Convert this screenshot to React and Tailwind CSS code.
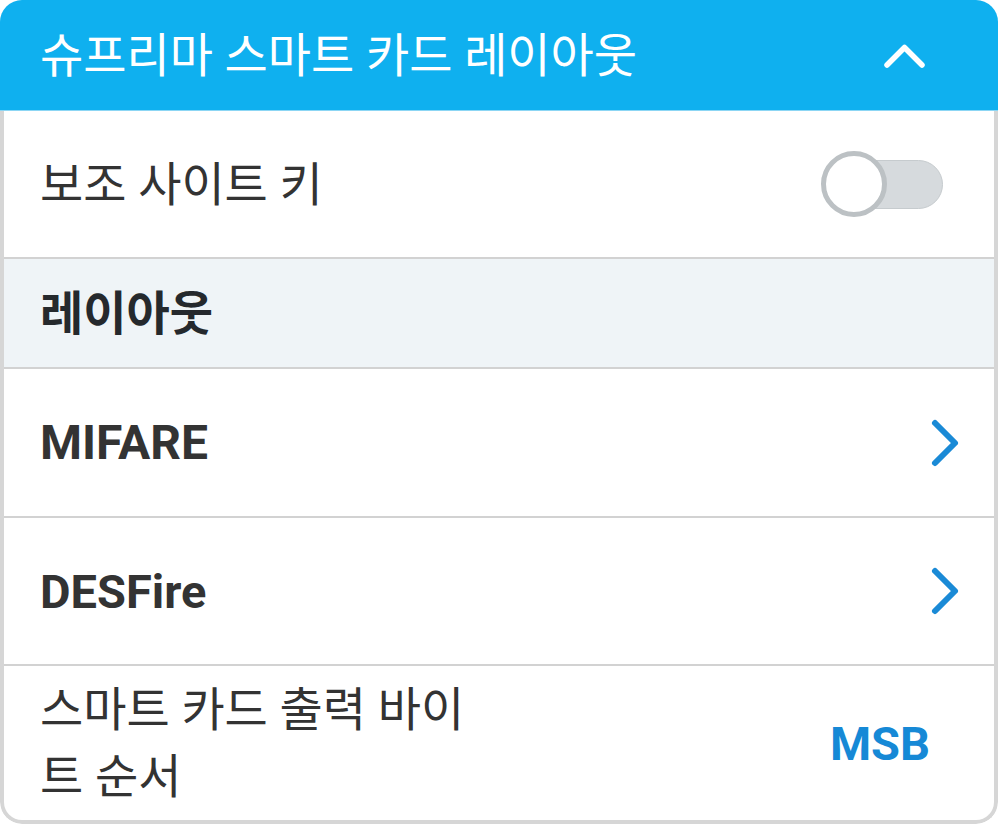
import React from "react";

const Divider = () => <div className="h-[2px] bg-[#d2d2d2]" />;

const ChevronRight = () => (
  <svg width="34" height="54" viewBox="0 0 34 54" className="block">
    <polyline points="7,7 27,27 7,47" fill="none" stroke="#1a8ad6" strokeWidth="6" strokeLinecap="round" strokeLinejoin="round" />
  </svg>
);

export default function App() {
  return (
    <div className="w-[998px] h-[824px] bg-white font-['Roboto','Noto_Sans_CJK_KR',sans-serif]">
      <div className="flex flex-col w-full h-full rounded-[22px] overflow-hidden">
        <div className="h-[111px] shrink-0 bg-[#0fb0ef] border-b border-[#8cd6f4] flex items-center justify-between pl-10 pr-[72px]">
          <span className="text-white text-[47px] leading-none">슈프리마 스마트 카드 레이아웃</span>
          <svg width="43" height="27" viewBox="0 0 43 27" className="block">
            <polyline points="4,23 21.5,5.5 39,23" fill="none" stroke="#ffffff" strokeWidth="5.5" strokeLinecap="round" strokeLinejoin="round" />
          </svg>
        </div>
        <div className="flex-1 flex flex-col border-x-4 border-b-4 border-[#d6d6d6] rounded-b-[22px] bg-white text-[#333333]">
          <div className="h-[146px] flex items-center justify-between pl-9 pr-[51px]">
            <span className="text-[47px] leading-none">보조 사이트 키</span>
            <div className="relative w-[120px] h-[49px]">
              <div className="absolute inset-0 rounded-full bg-[#d6dadd] border border-[#c6cbce]" />
              <div className="absolute left-[-2px] top-[-9px] w-[66px] h-[66px] rounded-full bg-white border-[5px] border-[#bcc1c4]" />
            </div>
          </div>
          <Divider />
          <div className="h-[108px] flex items-center bg-[#eff4f7] pl-9">
            <span className="text-[47px] leading-none font-bold text-[#25292d]">레이아웃</span>
          </div>
          <Divider />
          <div className="h-[147px] flex items-center justify-between pl-9 pr-[32px]">
            <span className="text-[48px] leading-none font-bold">MIFARE</span>
            <ChevronRight />
          </div>
          <Divider />
          <div className="h-[146px] flex items-center justify-between pl-9 pr-[32px]">
            <span className="text-[47px] leading-none font-bold">DESFire</span>
            <ChevronRight />
          </div>
          <Divider />
          <div className="flex-1 flex items-center justify-between pl-9 pr-[64px]">
            <span className="w-[440px] text-[47px] leading-[67px]">스마트 카드 출력 바이트 순서</span>
            <span className="text-[47px] leading-none font-bold text-[#1689d6]">MSB</span>
          </div>
        </div>
      </div>
    </div>
  );
}
